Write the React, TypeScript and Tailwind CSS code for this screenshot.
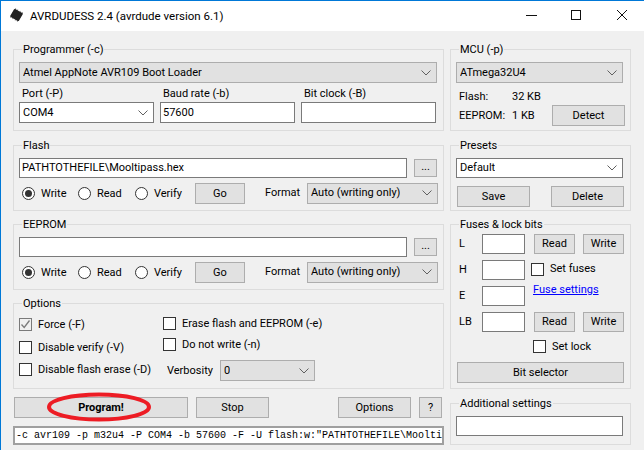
import type { ReactNode } from 'react';

const raised = 'border border-[#adadad] bg-[#e1e1e1] text-[#000]';
const sunken = 'border border-[#7a7a7a] bg-white';

function Group({ label, className, children }: { label: string; className: string; children: ReactNode }) {
  return (
    <div className={`relative border border-[#dcdcdc] ${className}`}>
      <span className="absolute left-[8px] top-[-8px] bg-[#f0f0f0] px-[1px] leading-[16px]">{label}</span>
      {children}
    </div>
  );
}

function Chevron() {
  return (
    <svg width="10" height="6" viewBox="0 0 10 6" className="shrink-0" fill="none" stroke="#606060" strokeWidth="1">
      <path d="M0.5 0.5 L5 5 L9.5 0.5" />
    </svg>
  );
}

function Select({ value, white, className }: { value: string; white?: boolean; className: string }) {
  return (
    <div className={`flex items-center justify-between pl-[3px] pr-[5px] ${white ? sunken : 'border border-[#adadad] bg-[#e1e1e1]'} ${className}`}>
      <span className="truncate">{value}</span>
      <Chevron />
    </div>
  );
}

function Btn({ children, className }: { children: ReactNode; className: string }) {
  return <button className={`flex items-center justify-center ${raised} ${className}`}>{children}</button>;
}

function TextBox({ value, className }: { value?: string; className: string }) {
  return <div className={`flex items-center overflow-hidden pl-[2px] ${sunken} ${className}`}>{value}</div>;
}

function Radio({ label, on, className }: { label: string; on?: boolean; className: string }) {
  return (
    <div className={`flex items-center ${className}`}>
      <div className="flex h-[13px] w-[13px] items-center justify-center rounded-full border border-[#333] bg-white">
        {on && <div className="h-[7px] w-[7px] rounded-full bg-[#333]" />}
      </div>
      <span className="ml-[6px]">{label}</span>
    </div>
  );
}

function Check({ label, on, className }: { label: string; on?: boolean; className: string }) {
  return (
    <div className={`flex items-center ${className}`}>
      <div className={`flex h-[13px] w-[13px] items-center justify-center border ${on ? 'border-[#7a7a7a] bg-[#f0f0f0]' : 'border-[#333] bg-white'}`}>
        {on && (
          <svg width="11" height="11" viewBox="0 0 11 11" fill="none" stroke="#7a7a7a" strokeWidth="1.3">
            <path d="M1.5 5.5 L4.2 8.5 L9.5 1.5" />
          </svg>
        )}
      </div>
      <span className="ml-[6px] whitespace-nowrap">{label}</span>
    </div>
  );
}

function FileGroup({ label, value }: { label: string; value?: string }) {
  return (
    <Group label={label} className="h-[66px] px-[5px] pt-[12px]">
      <div className="flex items-center">
        <TextBox value={value} className="h-[20px] w-[388px]" />
        <Btn className="ml-[7px] h-[18px] w-[23px] pb-[2px]">...</Btn>
      </div>
      <div className="mt-[5px] flex h-[21px] items-center">
        <Radio label="Write" on className="ml-[3px] w-[56px]" />
        <Radio label="Read" className="w-[57px]" />
        <Radio label="Verify" className="w-[60px]" />
        <Btn className="h-[21px] w-[50px]">Go</Btn>
        <span className="mb-[2px] ml-[20px] w-[42px]">Format</span>
        <Select value="Auto (writing only)" className="mb-[1px] h-[21px] w-[131px]" />
      </div>
    </Group>
  );
}

function FuseRow({ label, children }: { label: string; children?: ReactNode }) {
  return (
    <div className="flex h-[20px] items-center">
      <span className="w-[23px]">{label}</span>
      <TextBox className="h-[20px] w-[43px]" />
      {children}
    </div>
  );
}

function FuseButtons() {
  return (
    <>
      <Btn className="ml-[9px] h-[20px] w-[41px]">Read</Btn>
      <Btn className="ml-[8px] h-[20px] w-[41px]">Write</Btn>
    </>
  );
}

function ChipIcon() {
  return (
    <svg width="16" height="16" viewBox="0 0 16 16" className="shrink-0">
      <g transform="rotate(30 6.5 7)">
        <path d="M2.5 1.5v11M5 1.5v11M8 1.5v11M10.5 1.5v11" stroke="#9a9a9a" strokeWidth="1" />
        <rect x="1.5" y="2.5" width="10" height="9" rx="1" fill="#222" />
      </g>
    </svg>
  );
}

export default function App() {
  return (
    <div className="h-[450px] w-[644px] overflow-hidden border-l border-t border-[#0078d7] bg-[#f0f0f0] font-['Roboto',sans-serif] text-[11px] leading-[16px] text-[#000]">
      {/* title bar */}
      <div className="flex h-[30px] items-center bg-white pl-[9px]">
        <ChipIcon />
        <span className="ml-[4px] flex-1 text-[11.5px]">AVRDUDESS 2.4 (avrdude version 6.1)</span>
        <svg width="118" height="30" viewBox="0 0 118 30" fill="none" stroke="#111" strokeWidth="1">
          <path d="M0 14.5 H11" />
          <rect x="45.5" y="9.5" width="9" height="9" />
          <path d="M91 9 L101 19 M101 9 L91 19" />
        </svg>
      </div>

      <div className="flex gap-[6px] pl-[12px] pt-[18px]">
        {/* left column */}
        <div className="flex w-[431px] flex-col">
          <Group label="Programmer (-c)" className="h-[82px] px-[5px] pt-[12px]">
            <Select value="Atmel AppNote AVR109 Boot Loader" className="h-[21px] w-[418px]" />
            <div className="mt-[3px] flex gap-[6px]">
              <div className="w-[135px]">
                <div className="h-[16px] pl-[3px]">Port (-P)</div>
                <Select value="COM4" white className="h-[21px] w-[135px]" />
              </div>
              <div className="w-[135px]">
                <div className="h-[16px] pl-[3px]">Baud rate (-b)</div>
                <TextBox value="57600" className="h-[21px]" />
              </div>
              <div className="w-[135px]">
                <div className="h-[16px] pl-[3px]">Bit clock (-B)</div>
                <TextBox className="h-[21px]" />
              </div>
            </div>
          </Group>

          <div className="mt-[14px]">
            <FileGroup label="Flash" value="PATHTOTHEFILE\Mooltipass.hex" />
          </div>
          <div className="mt-[13px]">
            <FileGroup label="EEPROM" />
          </div>

          <Group label="Options" className="mt-[13px] flex h-[86px] px-[5px] pt-[14px]">
            <div className="w-[144px]">
              <Check label="Force (-F)" on className="h-[13px]" />
              <Check label="Disable verify (-V)" className="mt-[10px] h-[13px]" />
              <Check label="Disable flash erase (-D)" className="mt-[9px] h-[13px]" />
            </div>
            <div className="mt-[-1px]">
              <Check label="Erase flash and EEPROM (-e)" className="h-[13px]" />
              <Check label="Do not write (-n)" className="mt-[8px] h-[13px]" />
              <div className="mt-[9px] flex items-center pl-[4px]">
                <span className="w-[53px]">Verbosity</span>
                <Select value="0" className="h-[21px] w-[95px]" />
              </div>
            </div>
          </Group>

          <div className="relative mt-[8px] flex h-[21px] pl-[1px] pr-[2px]">
            <Btn className="h-[21px] w-[174px] font-bold">Program!</Btn>
            <Btn className="ml-[8px] h-[21px] w-[73px]">Stop</Btn>
            <Btn className="ml-auto h-[21px] w-[73px]">Options</Btn>
            <Btn className="ml-[8px] h-[21px] w-[23px]">?</Btn>
            {/* red marker drawn over the button */}
            <svg width="106" height="32" viewBox="0 0 106 32" className="absolute left-[34px] top-[-5px]" fill="none" stroke="#ed1c24" strokeWidth="4">
              <ellipse cx="52" cy="15" rx="50" ry="12.5" />
            </svg>
          </div>

          <div className="mt-[8px] flex h-[19px] items-center overflow-hidden whitespace-pre border-2 border-[#a0a0a0] bg-white pl-[1px] font-['Liberation_Mono',monospace] text-[10px]">
            -c avr109 -p m32u4 -P COM4 -b 57600 -F -U flash:w:"PATHTOTHEFILE\Moolti
          </div>
        </div>

        {/* right column */}
        <div className="flex w-[181px] flex-col">
          <Group label="MCU (-p)" className="h-[82px] px-[5px] pt-[12px]">
            <Select value="ATmega32U4" className="h-[21px] w-[167px]" />
            <div className="mt-[6px] flex pl-[3px]">
              <span className="w-[53px]">Flash:</span>
              <span>32 KB</span>
            </div>
            <div className="flex items-center pl-[3px]">
              <span className="w-[53px]">EEPROM:</span>
              <span>1 KB</span>
              <Btn className="ml-auto h-[21px] w-[73px]">Detect</Btn>
            </div>
          </Group>

          <Group label="Presets" className="mt-[14px] h-[66px] px-[5px] pt-[12px]">
            <Select value="Default" white className="h-[20px] w-[167px]" />
            <div className="ml-[1px] mt-[8px] flex w-[167px] justify-between">
              <Btn className="h-[21px] w-[73px]">Save</Btn>
              <Btn className="h-[21px] w-[73px]">Delete</Btn>
            </div>
          </Group>

          <Group label="Fuses & lock bits" className="mt-[13px] h-[165px] pl-[8px] pr-[6px] pt-[9px]">
            <div className="flex flex-col gap-[6px]">
              <FuseRow label="L"><FuseButtons /></FuseRow>
              <FuseRow label="H"><Check label="Set fuses" className="mb-[2px] ml-[6px]" /></FuseRow>
              <FuseRow label="E">
                <span className="mb-[12px] ml-[8px] text-[#0000ff] underline">Fuse settings</span>
              </FuseRow>
              <FuseRow label="LB"><FuseButtons /></FuseRow>
            </div>
            <Check label="Set lock" className="ml-[74px] mt-[8px] h-[13px]" />
            <Btn className="ml-[-2px] mt-[9px] h-[21px] w-[167px]">Bit selector</Btn>
          </Group>

          <Group label="Additional settings" className="mt-[14px] h-[42px] px-[5px] pt-[12px]">
            <TextBox className="h-[20px] w-[167px]" />
          </Group>
        </div>
      </div>
    </div>
  );
}
